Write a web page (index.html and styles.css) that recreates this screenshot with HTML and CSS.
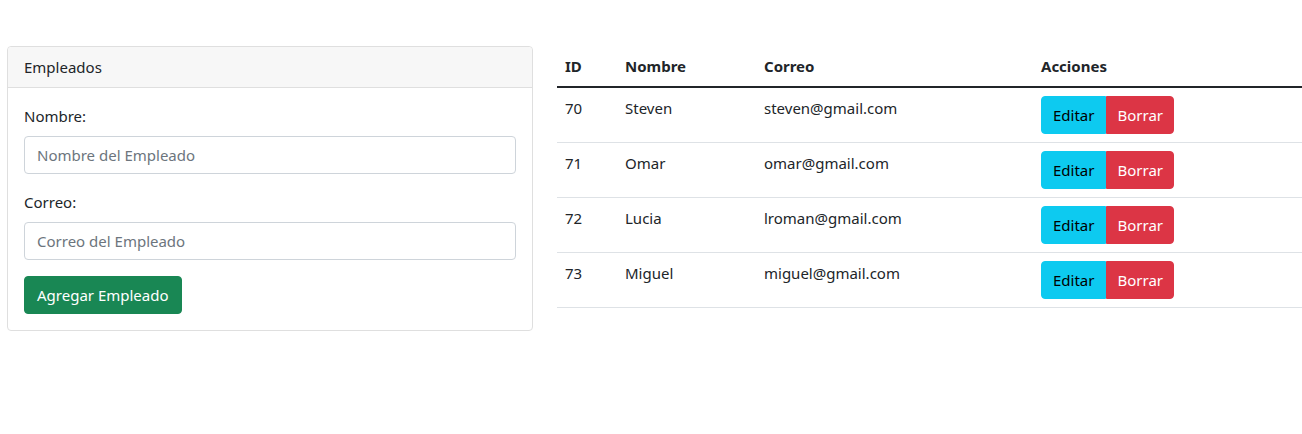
FILE: index.html
```html
<!DOCTYPE html>
<html lang="es">
<head>
<meta charset="utf-8">
<title>Empleados</title>
<link rel="stylesheet" href="styles.css">
</head>
<body>
<div class="layout">
  <div class="card">
    <div class="card-header">Empleados</div>
    <div class="card-body">
      <label class="label">Nombre:</label>
      <input class="input" type="text" placeholder="Nombre del Empleado">
      <label class="label">Correo:</label>
      <input class="input" type="text" placeholder="Correo del Empleado">
      <button class="btn btn-success">Agregar Empleado</button>
    </div>
  </div>
  <table class="table">
    <thead>
      <tr><th class="c-id">ID</th><th class="c-name">Nombre</th><th class="c-mail">Correo</th><th>Acciones</th></tr>
    </thead>
    <tbody>
      <tr><td>70</td><td>Steven</td><td>steven@gmail.com</td><td><div class="group"><button class="btn btn-info">Editar</button><button class="btn btn-danger">Borrar</button></div></td></tr>
      <tr><td>71</td><td>Omar</td><td>omar@gmail.com</td><td><div class="group"><button class="btn btn-info">Editar</button><button class="btn btn-danger">Borrar</button></div></td></tr>
      <tr><td>72</td><td>Lucia</td><td>lroman@gmail.com</td><td><div class="group"><button class="btn btn-info">Editar</button><button class="btn btn-danger">Borrar</button></div></td></tr>
      <tr><td>73</td><td>Miguel</td><td>miguel@gmail.com</td><td><div class="group"><button class="btn btn-info">Editar</button><button class="btn btn-danger">Borrar</button></div></td></tr>
    </tbody>
  </table>
</div>
</body>
</html>
```
FILE: styles.css
```css
* { box-sizing: border-box; }
body {
  margin: 0;
  font-family: "Noto Sans", "Open Sans", sans-serif;
  font-size: 15px;
  line-height: 24px;
  color: #212529;
  background: #fff;
}
.layout {
  display: flex;
  align-items: flex-start;
  gap: 24px;
  padding: 46px 0 0 7px;
}
.card {
  width: 526px;
  flex: none;
  border: 1px solid #dfdfdf;
  border-radius: 4px;
}
.card-header {
  background: #f7f7f7;
  border-bottom: 1px solid #dfdfdf;
  padding: 8px 16px;
  border-radius: 4px 4px 0 0;
}
.card-body {
  padding: 16px;
  display: flex;
  flex-direction: column;
  align-items: flex-start;
}
.label {
  display: block;
  margin-bottom: 8px;
}
.input {
  width: 100%;
  height: 38px;
  border: 1px solid #ced4da;
  border-radius: 4px;
  padding: 6px 12px;
  font: inherit;
  color: #212529;
  margin-bottom: 16px;
}
.input::placeholder { color: #6c757d; }
.btn {
  font: inherit;
  height: 38px;
  padding: 6px 12px;
  border: 1px solid transparent;
  border-radius: 4px;
  cursor: pointer;
}
.btn-success { background: #198754; border-color: #198754; color: #fff; }
.btn-info { background: #0dcaf0; border-color: #0dcaf0; color: #000; }
.btn-danger { background: #dc3545; border-color: #dc3545; color: #fff; }
.group { display: inline-flex; }
.group .btn-info { border-radius: 4px 0 0 4px; padding: 6px 11px; }
.group .btn-danger { border-radius: 0 4px 4px 0; padding: 6px 10px; }
.table {
  flex: 1;
  border-collapse: collapse;
}
.table th, .table td {
  text-align: left;
  vertical-align: top;
  padding: 8px;
}
.table th { font-weight: 700; padding-bottom: 8px; }
.table thead { border-bottom: 2px solid #212529; }
.table tbody tr { border-bottom: 1px solid #dee2e6; }
.c-id { width: 60px; }
.c-name { width: 139px; }
.c-mail { width: 277px; }
```
